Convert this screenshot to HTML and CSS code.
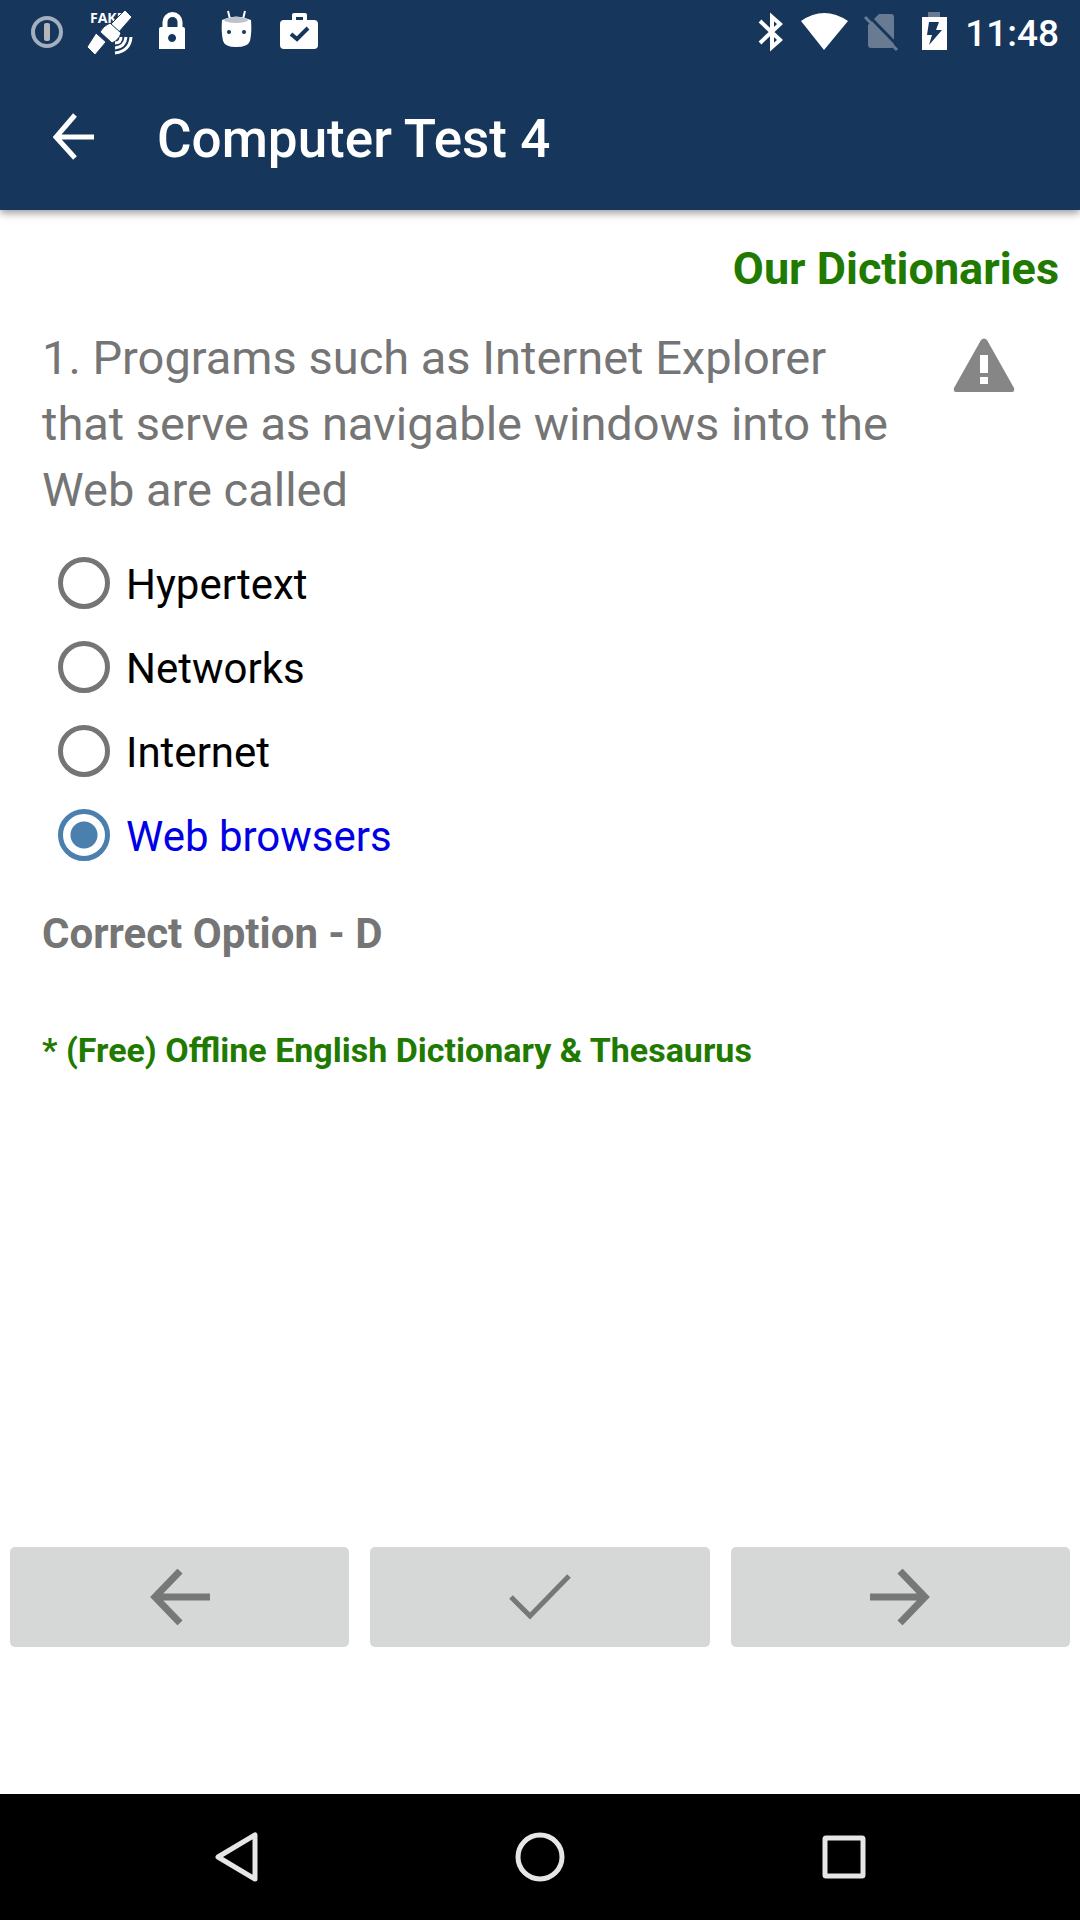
FILE: index.html
```html
<!DOCTYPE html>
<html lang="en">
<head>
<meta charset="utf-8">
<meta name="viewport" content="width=device-width, initial-scale=1">
<title>Computer Test 4</title>
<link rel="stylesheet" href="styles.css">
</head>
<body>
<div class="screen">
  <header class="top">
    <div class="status">
      <div class="status-group">
        <svg class="note-icon" viewBox="0 0 63 63" aria-hidden="true">
          <circle cx="31" cy="32" r="14" fill="none" stroke="#a3aebf" stroke-width="4"/>
          <rect x="28" y="23" width="6" height="18" rx="2" fill="#b3b5b8"/>
        </svg>
        <svg class="note-icon" viewBox="0 0 63 63" aria-hidden="true">
          <text class="fake" x="11" y="23">FAKE</text>
          <g fill="#fff" stroke="#17365c" stroke-width="1">
            <path d="M46 10L53 17L39 33L31 25Z"/>
            <path d="M17 33L27 42L16 55L8 47Z"/>
            <path d="M31 23L42 33Q40 40 33 43L21 32Q24 26 31 23Z"/>
          </g>
          <g fill="none" stroke="#fff" stroke-width="3">
            <path d="M42 37Q42 43 36 43"/>
            <path d="M47 37Q46 47 36 48"/>
            <path d="M52 37Q51 51 36 53"/>
          </g>
        </svg>
        <svg class="note-icon" viewBox="0 0 63 63" aria-hidden="true">
          <path d="M23 29V22a7 7 0 0 1 15 0v7" fill="none" stroke="#fff" stroke-width="5"/>
          <path fill="#fff" fill-rule="evenodd" d="M19 27H41a2 2 0 0 1 2 2V49H17V29a2 2 0 0 1 2-2ZM30 34a4 4 0 1 0 .1 0Z"/>
        </svg>
        <svg class="note-icon" viewBox="0 0 63 63" aria-hidden="true">
          <path d="M23 11L25 19M40 11L38 19" stroke="#fff" stroke-width="2"/>
          <path d="M17 20Q31 13 46 20Q47 32 45 41Q43 47 31 47Q20 47 18 41Q16 32 17 20Z" fill="#fff"/>
          <ellipse cx="31" cy="20" rx="12" ry="3" fill="#bcc3cc"/>
          <circle cx="24" cy="32" r="2" fill="#17365c"/>
          <circle cx="39" cy="32" r="2" fill="#17365c"/>
        </svg>
        <svg class="note-icon" viewBox="0 0 63 63" aria-hidden="true">
          <path d="M26 21V15H37V21" fill="none" stroke="#fff" stroke-width="4" stroke-linejoin="round"/>
          <rect x="12" y="20" width="38" height="29" rx="4" fill="#fff"/>
          <path d="M23 34L29 39L40 28" fill="none" stroke="#17365c" stroke-width="4"/>
        </svg>
      </div>
      <div class="status-group">
        <svg class="sys-icon" viewBox="0 0 55 63" aria-hidden="true">
          <path d="M17 21L37 40L29 47V17L37 24L17 43" fill="none" stroke="#fff" stroke-width="4"/>
        </svg>
        <svg class="sys-icon" viewBox="0 0 55 63" aria-hidden="true">
          <path d="M3 21Q26 5 50 21L26 50Z" fill="#fff"/>
        </svg>
        <svg class="sys-icon" viewBox="0 0 55 63" aria-hidden="true">
          <path d="M26 14H38Q41 14 41 17V45Q41 48 38 48H18Q15 48 15 45V25Z" fill="#687b93"/>
          <path d="M14 14L46 47" stroke="#17365c" stroke-width="3"/>
          <path d="M12 17L44 50" stroke="#687b93" stroke-width="3"/>
        </svg>
        <svg class="sys-icon" viewBox="0 0 55 63" aria-hidden="true">
          <path d="M20 12H32V17H20Z" fill="#687b93"/>
          <path d="M14 17H39V50H14Z" fill="#fff"/>
          <path d="M21 22H31L28 30H34L21 45L24 35H19Z" fill="#17365c"/>
        </svg>
        <time class="clock">11:48</time>
      </div>
    </div>
    <div class="appbar">
      <button class="back" type="button" aria-label="Back">
        <svg width="42" height="48" viewBox="0 0 42 48"><path d="M41 24H4M22 2L3 24L22 45" fill="none" stroke="#fff" stroke-width="5"/></svg>
      </button>
      <h1 class="title">Computer Test 4</h1>
    </div>
  </header>

  <main class="content">
    <a class="dictionaries" href="#dictionaries">Our Dictionaries</a>
    <form class="quiz">
      <div class="question-row">
        <h2 class="question" id="question">1. Programs such as Internet Explorer that serve as navigable windows into the Web are called</h2>
        <button class="report" type="button" aria-label="Report a problem">
          <svg width="62" height="54" viewBox="0 0 62 54"><path fill="#868686" fill-rule="evenodd" d="M28 2Q31 -1 34 2L61 50Q62 54 59 54H3Q0 54 1 50ZM27 17V35H35V17ZM27 39V46H35V39Z"/></svg>
        </button>
      </div>
      <div class="options" role="radiogroup" aria-labelledby="question">
        <label class="option"><input class="radio" type="radio" name="answer" value="A"><span class="option-text">Hypertext</span></label>
        <label class="option"><input class="radio" type="radio" name="answer" value="B"><span class="option-text">Networks</span></label>
        <label class="option"><input class="radio" type="radio" name="answer" value="C"><span class="option-text">Internet</span></label>
        <label class="option"><input class="radio" type="radio" name="answer" value="D" checked><span class="option-text">Web browsers</span></label>
      </div>
    </form>
    <p class="result">Correct Option - D</p>
    <a class="promo" href="#thesaurus">* (Free) Offline English Dictionary &amp; Thesaurus</a>
  </main>

  <div class="actions">
    <button class="action" type="button" aria-label="Previous question">
      <svg width="60" height="56" viewBox="0 0 60 56"><path d="M60 28H5M30 2L5 28L30 54" fill="none" stroke="#767877" stroke-width="7"/></svg>
    </button>
    <button class="action" type="button" aria-label="Check answer">
      <svg width="62" height="46" viewBox="0 0 62 46"><path d="M2 23L21 42L60 2" fill="none" stroke="#767877" stroke-width="5"/></svg>
    </button>
    <button class="action" type="button" aria-label="Next question">
      <svg width="60" height="56" viewBox="0 0 60 56"><path d="M0 28H55M30 2L55 28L30 54" fill="none" stroke="#767877" stroke-width="7"/></svg>
    </button>
  </div>

  <nav class="system-nav" aria-label="System">
    <button class="nav-button" type="button" aria-label="Back">
      <svg width="50" height="50" viewBox="0 0 50 50"><path d="M44 3V47L7 25Z" fill="none" stroke="#e6e6e6" stroke-width="5" stroke-linejoin="round"/></svg>
    </button>
    <button class="nav-button" type="button" aria-label="Home">
      <svg width="50" height="50" viewBox="0 0 50 50"><circle cx="25" cy="25" r="22" fill="none" stroke="#e6e6e6" stroke-width="5"/></svg>
    </button>
    <button class="nav-button" type="button" aria-label="Overview">
      <svg width="50" height="50" viewBox="0 0 50 50"><rect x="6" y="6" width="38" height="38" rx="1" fill="none" stroke="#e6e6e6" stroke-width="5"/></svg>
    </button>
  </nav>
</div>
</body>
</html>
```
FILE: styles.css
```css
* {
  box-sizing: border-box;
}

body {
  margin: 0;
  background: #fff;
  font-family: Roboto, "Liberation Sans", sans-serif;
}

button {
  display: flex;
  align-items: center;
  justify-content: center;
  margin: 0;
  padding: 0;
  border: 0;
  background: none;
  cursor: pointer;
}

svg {
  display: block;
}

.screen {
  display: flex;
  flex-direction: column;
  min-height: 100vh;
}

.top {
  background: #17365c;
  color: #fff;
  box-shadow: 0 3px 8px rgba(0, 0, 0, 0.4);
}

.status {
  display: flex;
  justify-content: space-between;
  height: 63px;
  padding: 0 21px 0 16px;
}

.status-group {
  display: flex;
  align-items: center;
}

.note-icon {
  width: 63px;
  height: 63px;
}

.sys-icon {
  width: 55px;
  height: 63px;
}

.fake {
  fill: #fff;
  font-family: "Open Sans", sans-serif;
  font-size: 14px;
  font-weight: 700;
}

.clock {
  padding: 3px 0 0 2px;
  font-size: 37px;
  font-weight: 500;
}

.appbar {
  display: flex;
  align-items: center;
  height: 147px;
}

.back {
  width: 147px;
  height: 147px;
}

.title {
  margin: 0;
  padding: 4px 0 0 10px;
  font-size: 53px;
  font-weight: 500;
}

.content {
  display: flex;
  flex: 1;
  flex-direction: column;
  align-items: flex-start;
  padding: 33px 21px 0 42px;
}

.dictionaries {
  align-self: flex-end;
  color: #217a00;
  font-size: 45px;
  font-weight: 700;
  line-height: 52px;
  text-decoration: none;
}

.quiz {
  width: 100%;
}

.question-row {
  display: flex;
  align-items: flex-start;
  justify-content: space-between;
  padding: 30px 22px 0 0;
}

.question {
  flex: 1;
  max-width: 870px;
  margin: 0;
  color: #757575;
  font-size: 47px;
  font-weight: 400;
  line-height: 66px;
}

.report {
  width: 106px;
  padding-top: 13px;
}

.options {
  display: flex;
  flex-direction: column;
  align-items: flex-start;
  padding: 18px 0 0 16px;
}

.option {
  display: flex;
  align-items: center;
  gap: 16px;
  height: 84px;
  color: #000;
  font-size: 42px;
  line-height: 50px;
}

.option-text {
  padding-top: 4px;
}

.option:has(:checked) {
  color: #0000e6;
}

.radio {
  width: 52px;
  height: 52px;
  margin: 0;
  border: 5px solid #757575;
  border-radius: 50%;
  appearance: none;
}

.radio:checked {
  border-color: #4a7fae;
  background: radial-gradient(circle, #4a7fae 13px, #fff 14px);
}

.result {
  margin: 0;
  padding-top: 32px;
  color: #757575;
  font-size: 42px;
  font-weight: 700;
  line-height: 50px;
}

.promo {
  padding-top: 70px;
  color: #217a00;
  font-size: 34px;
  font-weight: 700;
  line-height: 42px;
  text-decoration: none;
}

.actions {
  display: grid;
  grid-template-columns: repeat(3, 1fr);
  gap: 21px;
  padding: 0 10px 147px;
}

.action {
  height: 100px;
  border-radius: 5px;
  background: #d6d8d7;
}

.system-nav {
  display: grid;
  grid-template-columns: repeat(3, 1fr);
  height: 126px;
  padding: 0 84px;
  background: #000;
}
```
